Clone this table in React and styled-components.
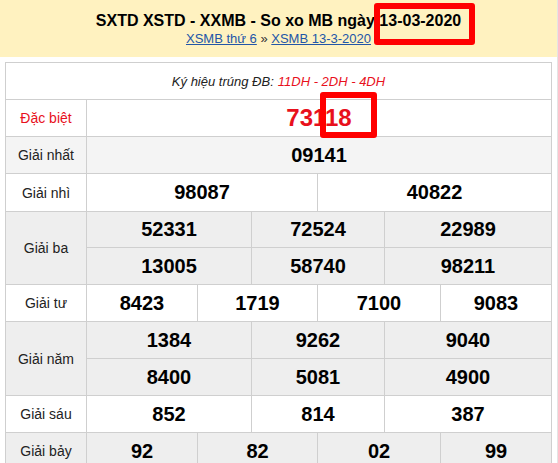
import React from "react";
import styled, { createGlobalStyle } from "styled-components";

const Global = createGlobalStyle`
  html, body { margin: 0; padding: 0; background: #fff; }
  body { font-family: "Liberation Sans", Arial, sans-serif; }
`;

const Page = styled.div`
  position: relative;
  width: 557px;
  border-right: 1px solid #e4e4e4;
  min-height: 463px;
`;

const Header = styled.header`
  background: #fff2c0;
  height: 57px;
  padding-top: 11px;
  box-sizing: border-box;
  text-align: center;
`;

const Title = styled.h1`
  margin: 0;
  font-size: 16px;
  line-height: 20px;
  font-weight: bold;
  color: #000;
`;

const Crumbs = styled.div`
  font-size: 13px;
  line-height: 16px;
  color: #333;
`;

const Crumb = styled.a`
  color: #2356a8;
  text-decoration: underline;
`;

const Body = styled.div`
  padding: 5px 0 0 5px;
`;

const Board = styled.div`
  display: grid;
  grid-template-columns: 81px 111px 54px 66px 67px 56px 111px;
  grid-template-rows: 37px 37px 37px 38px 36px 37px 37px 37px 37px 37px 37px;
  width: 547px;
  box-sizing: border-box;
  border-left: 1px solid #cfcfcf;
  border-top: 1px solid #cfcfcf;
`;

const Cell = styled.div`
  grid-column: span ${(p) => p.$span || 1};
  grid-row: span ${(p) => p.$rows || 1};
  display: flex;
  align-items: center;
  justify-content: center;
  border-right: 1px solid #cfcfcf;
  border-bottom: 1px solid #cfcfcf;
  background: ${(p) => p.$bg || "#fff"};
  box-sizing: border-box;
`;

const Label = styled(Cell)`
  font-size: 14px;
  color: ${(p) => (p.$red ? "#e8101c" : "#222")};
`;

const Num = styled(Cell)`
  font-size: 20px;
  font-weight: bold;
  color: #000;
`;

const Special = styled(Cell)`
  font-size: 24px;
  font-weight: bold;
  color: #e8101c;
`;

const Note = styled(Cell)`
  font-size: 13px;
  font-style: italic;
  color: #222;
`;

const Red = styled.span`
  color: #e8101c;
  margin-left: 4px;
`;

const Mark = styled.div`
  position: absolute;
  left: ${(p) => p.$x}px;
  top: ${(p) => p.$y}px;
  width: ${(p) => p.$w}px;
  height: ${(p) => p.$h}px;
  box-sizing: border-box;
  border: 6px solid #ff0000;
  border-radius: 3px;
  pointer-events: none;
`;

const G1 = "#f4f4f4";
const G = "#eeeeee";

export default function App() {
  return (
    <Page>
      <Global />
      <Header>
        <Title>SXTD XSTD - XXMB - So xo MB ngày 13-03-2020</Title>
        <Crumbs>
          <Crumb href="#">XSMB thứ 6</Crumb> » <Crumb href="#">XSMB 13-3-2020</Crumb>
        </Crumbs>
      </Header>
      <Body>
        <Board>
          <Note $span={7}>
            Ký hiệu trúng ĐB:<Red>11DH - 2DH - 4DH</Red>
          </Note>

          <Label $red>Đặc biệt</Label>
          <Special $span={6}>73118</Special>

          <Label $bg={G1}>Giải nhất</Label>
          <Num $span={6} $bg={G1}>09141</Num>

          <Label>Giải nhì</Label>
          <Num $span={3}>98087</Num>
          <Num $span={3}>40822</Num>

          <Label $rows={2} $bg={G}>Giải ba</Label>
          <Num $span={2} $bg={G}>52331</Num>
          <Num $span={2} $bg={G}>72524</Num>
          <Num $span={2} $bg={G}>22989</Num>
          <Num $span={2} $bg={G}>13005</Num>
          <Num $span={2} $bg={G}>58740</Num>
          <Num $span={2} $bg={G}>98211</Num>

          <Label>Giải tư</Label>
          <Num>8423</Num>
          <Num $span={2}>1719</Num>
          <Num $span={2}>7100</Num>
          <Num>9083</Num>

          <Label $rows={2} $bg={G}>Giải năm</Label>
          <Num $span={2} $bg={G}>1384</Num>
          <Num $span={2} $bg={G}>9262</Num>
          <Num $span={2} $bg={G}>9040</Num>
          <Num $span={2} $bg={G}>8400</Num>
          <Num $span={2} $bg={G}>5081</Num>
          <Num $span={2} $bg={G}>4900</Num>

          <Label>Giải sáu</Label>
          <Num $span={2}>852</Num>
          <Num $span={2}>814</Num>
          <Num $span={2}>387</Num>

          <Label $bg={G}>Giải bảy</Label>
          <Num $bg={G}>92</Num>
          <Num $span={2} $bg={G}>82</Num>
          <Num $span={2} $bg={G}>02</Num>
          <Num $bg={G}>99</Num>
        </Board>
      </Body>
      <Mark $x={374} $y={3} $w={101} $h={42} />
      <Mark $x={320} $y={92} $w={57} $h={46} />
    </Page>
  );
}
